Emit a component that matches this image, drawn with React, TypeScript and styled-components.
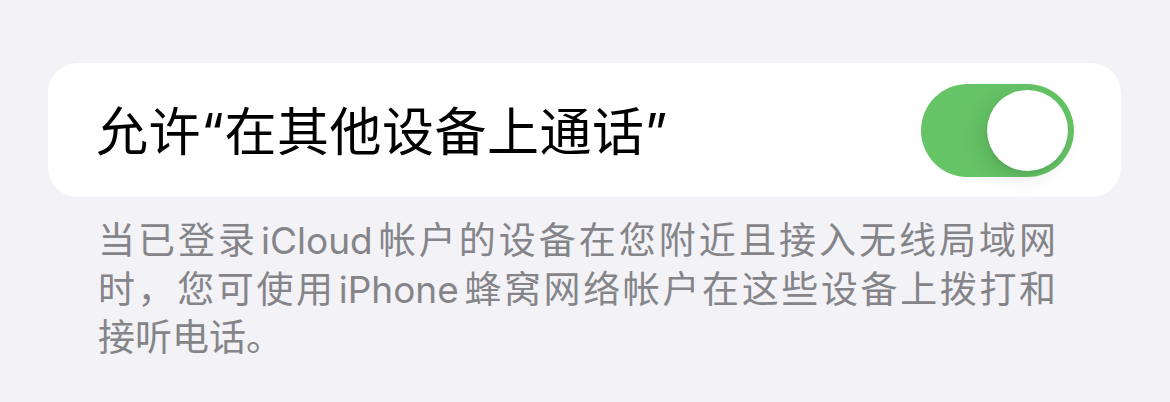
import { useState } from "react";
import styled, { createGlobalStyle } from "styled-components";

const GlobalStyle = createGlobalStyle`
    html, body {
        margin: 0;
        padding: 0;
        background-color: #f2f2f7;
    }
    body {
        font-family: "Inter", "Noto Sans CJK SC", sans-serif;
        -webkit-font-smoothing: antialiased;
    }
`;

const Page = styled.div`
    width: 1170px;
    height: 402px;
    box-sizing: border-box;
    padding: 63px 49px 0 48px;
    background-color: #f2f2f7;
    overflow: hidden;
`;

const Card = styled.div`
    display: flex;
    align-items: center;
    justify-content: space-between;
    height: 134px;
    padding: 0 47px 0 48px;
    background-color: #ffffff;
    border-radius: 30px;
`;

const Title = styled.span`
    font-size: 52px;
    line-height: 1;
    color: #000000;
    letter-spacing: 0.5px;
    padding-top: 6px;
`;

const Track = styled.button<{ $on: boolean }>`
    display: flex;
    align-items: center;
    justify-content: ${({ $on }) => ($on ? "flex-end" : "flex-start")};
    width: 153px;
    height: 93px;
    padding: 0 6px;
    border: none;
    border-radius: 47px;
    background-color: ${({ $on }) => ($on ? "#65c466" : "#e9e9eb")};
    cursor: pointer;
`;

const Thumb = styled.span`
    width: 81px;
    height: 81px;
    border-radius: 50%;
    background-color: #ffffff;
    box-shadow: -6px 6px 20px rgba(0, 0, 0, 0.12), 0 3px 3px rgba(0, 0, 0, 0.05);
`;

const Footer = styled.div`
    padding: 20px 0 0 50px;
    width: 958px;
    font-size: 37px;
    line-height: 48.5px;
    color: #858589;
`;

const Line = styled.div<{ $fill: boolean }>`
    white-space: nowrap;
    text-align: justify;
    text-align-last: ${({ $fill }) => ($fill ? "justify" : "left")};
`;

const Latin = styled.span`
    margin: 0 3px;
`;

const App = () => {
    const [enabled, setEnabled] = useState(true);

    return (
        <Page>
            <GlobalStyle />
            <Card>
                <Title>允许“在其他设备上通话”</Title>
                <Track
                    role="switch"
                    aria-checked={enabled}
                    $on={enabled}
                    onClick={() => setEnabled(!enabled)}
                >
                    <Thumb />
                </Track>
            </Card>
            <Footer>
                <Line $fill>
                    当已登录<Latin>iCloud</Latin>帐户的设备在您附近且接入无线局域网
                </Line>
                <Line $fill>
                    时，您可使用<Latin>iPhone</Latin>蜂窝网络帐户在这些设备上拨打和
                </Line>
                <Line $fill={false}>接听电话。</Line>
            </Footer>
        </Page>
    );
};

export default App;
